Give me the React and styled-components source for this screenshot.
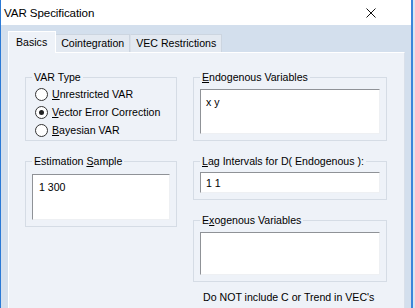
import React from 'react';
import styled, { createGlobalStyle } from 'styled-components';

const GlobalStyle = createGlobalStyle`
  html, body {
    margin: 0;
    padding: 0;
    overflow: hidden;
    background: #dce6f1;
  }
  body {
    font-family: "Liberation Sans", Arial, sans-serif;
    font-size: 10.6px;
    color: #000;
  }
`;

const radios = [
  { key: 'U', rest: 'nrestricted VAR', checked: false },
  { key: 'V', rest: 'ector Error Correction', checked: true },
  { key: 'B', rest: 'ayesian VAR', checked: false },
];

const App = () => {
  return (
    <>
      <GlobalStyle />
      <Window>
        <TitleBar>
          <Title>VAR Specification</Title>
          <CloseIcon viewBox="0 0 10 10">
            <path d="M0.5 0.5 L9.5 9.5 M9.5 0.5 L0.5 9.5" />
          </CloseIcon>
        </TitleBar>
        <Body>
          <TabStrip>
            <Tab selected>Basics</Tab>
            <Tab>Cointegration</Tab>
            <Tab>VEC Restrictions</Tab>
          </TabStrip>
          <Panel>
            <Column>
              <Group>
                <Legend>VAR Type</Legend>
                <RadioList>
                  {radios.map((r) => (
                    <RadioRow key={r.key}>
                      <RadioCircle checked={r.checked} />
                      <span><u>{r.key}</u>{r.rest}</span>
                    </RadioRow>
                  ))}
                </RadioList>
              </Group>
              <Group>
                <Legend>Estimation <u>S</u>ample</Legend>
                <TextBox height={46} gap={6} padLeft={6}>1 300</TextBox>
              </Group>
            </Column>
            <Column>
              <Group>
                <Legend><u>E</u>ndogenous Variables</Legend>
                <TextBox height={45} gap={5}>x y</TextBox>
              </Group>
              <Group>
                <Legend><u>L</u>ag Intervals for D( Endogenous ):</Legend>
                <TextBox height={21} gap={4} single>1 1</TextBox>
              </Group>
              <Group>
                <Legend>E<u>x</u>ogenous Variables</Legend>
                <TextBox height={43} gap={5} />
              </Group>
              <Note>Do NOT include C or Trend in VEC's</Note>
            </Column>
          </Panel>
        </Body>
      </Window>
    </>
  );
};

const Window = styled.div`
  width: 413px;
  height: 308px;
  box-sizing: border-box;
  display: flex;
  flex-direction: column;
  border-left: 1px solid #2b7ad6;
  border-right: 2px solid #3a86da;
  background: #d3dfed;
`;

const TitleBar = styled.div`
  height: 25px;
  flex: none;
  display: flex;
  align-items: center;
  justify-content: space-between;
  background: #ffffff;
  padding: 0 35px 0 3px;
`;

const Title = styled.div`
  font-size: 11.6px;
  letter-spacing: -0.1px;
  margin-top: -1px;
`;

const CloseIcon = styled.svg`
  width: 10px;
  height: 10px;
  stroke: #111;
  stroke-width: 1;
  fill: none;
`;

const Body = styled.div`
  flex: 1;
  display: flex;
  flex-direction: column;
  padding: 6px 6px 0 7px;
  min-height: 0;
`;

const TabStrip = styled.div`
  display: flex;
  align-items: flex-end;
  height: 21px;
  padding-left: 2px;
  position: relative;
  z-index: 1;
`;

const Tab = styled.div`
  box-sizing: border-box;
  height: ${(p) => (p.selected ? '22px' : '18px')};
  padding: ${(p) => (p.selected ? '4px 8px 0 7px' : '2px 5px 0 5px')};
  margin: ${(p) => (p.selected ? '0 -1px -1px -2px' : '0')};
  background: ${(p) => (p.selected ? '#eef2f8' : '#e3e9f1')};
  border: 1px solid ${(p) => (p.selected ? '#ffffff' : '#ccd5e0')};
  border-bottom: none;
  border-left-color: ${(p) => (p.selected ? '#ffffff' : '#d9e0e9')};
  white-space: nowrap;
  position: relative;
  z-index: ${(p) => (p.selected ? 2 : 1)};
`;

const Panel = styled.div`
  flex: 1;
  display: grid;
  grid-template-columns: 152px 194px;
  column-gap: 16px;
  align-items: start;
  padding: 17px 0 0 16px;
  background: #eef2f8;
  border: 1px solid #ffffff;
  border-right-color: #d9e0ea;
  border-bottom: none;
`;

const Column = styled.div`
  display: flex;
  flex-direction: column;
  gap: 13px;
`;

const Group = styled.fieldset`
  margin: 0;
  padding: 0 6px 6px 6px;
  border: 1px solid #d5dce5;
  border-radius: 0;
  min-width: 0;
`;

const Legend = styled.legend`
  padding: 0 2px;
  margin-left: 0;
  line-height: 14px;
`;

const RadioList = styled.div`
  display: flex;
  flex-direction: column;
  margin: 1px 0 -5px 3px;
`;

const RadioRow = styled.div`
  display: flex;
  align-items: center;
  height: 18px;
  gap: 4px;
`;

const RadioCircle = styled.span`
  width: 11px;
  height: 11px;
  border: 1px solid #333;
  border-radius: 50%;
  background: #fff;
  display: flex;
  align-items: center;
  justify-content: center;
  flex: none;
  &::after {
    content: '';
    width: 5px;
    height: 5px;
    border-radius: 50%;
    background: #222;
    display: ${(p) => (p.checked ? 'block' : 'none')};
  }
`;

const TextBox = styled.div`
  box-sizing: border-box;
  height: ${(p) => p.height}px;
  margin-top: ${(p) => p.gap}px;
  background: #ffffff;
  border: 1px solid;
  border-color: #8f9297 #eef0f3 #eef0f3 #8f9297;
  padding: ${(p) => (p.single ? '4px' : '6px')} 5px 0 ${(p) => p.padLeft || 5}px;
  line-height: 13px;
`;

const Note = styled.div`
  margin-top: -5px;
  padding-left: 10px;
  line-height: 14px;
`;

export default App;
